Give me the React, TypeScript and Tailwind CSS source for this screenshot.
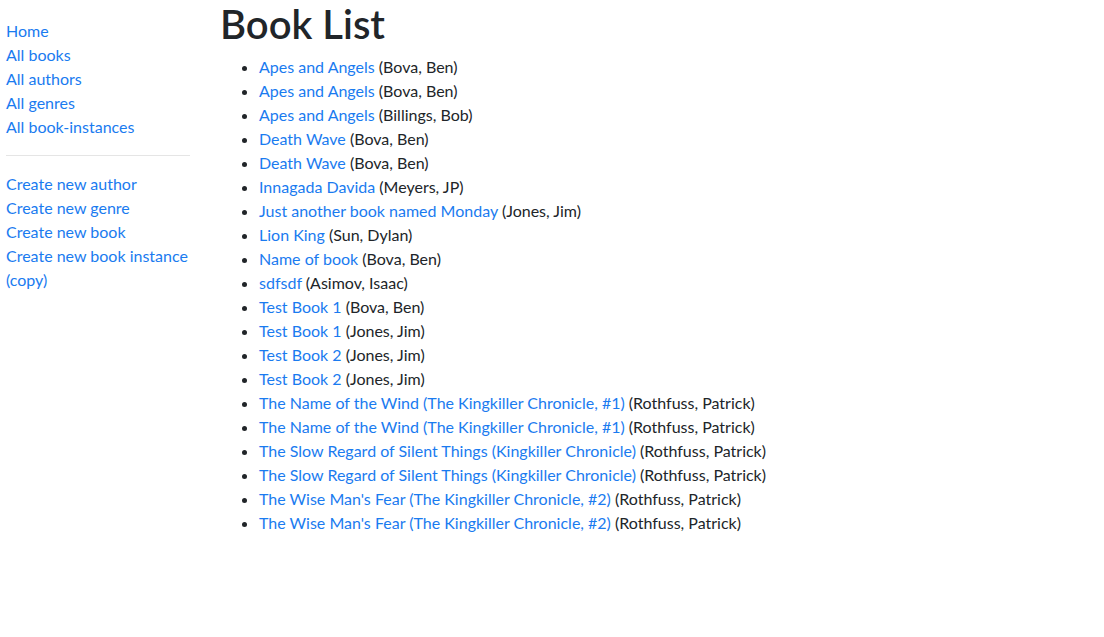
const books: [string, string][] = [
  ["Apes and Angels", "Bova, Ben"],
  ["Apes and Angels", "Bova, Ben"],
  ["Apes and Angels", "Billings, Bob"],
  ["Death Wave", "Bova, Ben"],
  ["Death Wave", "Bova, Ben"],
  ["Innagada Davida", "Meyers, JP"],
  ["Just another book named Monday", "Jones, Jim"],
  ["Lion King", "Sun, Dylan"],
  ["Name of book", "Bova, Ben"],
  ["sdfsdf", "Asimov, Isaac"],
  ["Test Book 1", "Bova, Ben"],
  ["Test Book 1", "Jones, Jim"],
  ["Test Book 2", "Jones, Jim"],
  ["Test Book 2", "Jones, Jim"],
  ["The Name of the Wind (The Kingkiller Chronicle, #1)", "Rothfuss, Patrick"],
  ["The Name of the Wind (The Kingkiller Chronicle, #1)", "Rothfuss, Patrick"],
  ["The Slow Regard of Silent Things (Kingkiller Chronicle)", "Rothfuss, Patrick"],
  ["The Slow Regard of Silent Things (Kingkiller Chronicle)", "Rothfuss, Patrick"],
  ["The Wise Man's Fear (The Kingkiller Chronicle, #2)", "Rothfuss, Patrick"],
  ["The Wise Man's Fear (The Kingkiller Chronicle, #2)", "Rothfuss, Patrick"],
];

const navTop = ["Home", "All books", "All authors", "All genres", "All book-instances"];
const navCreate = ["Create new author", "Create new genre", "Create new book", "Create new book instance (copy)"];

export default function App() {
  return (
    <div className="flex min-h-[637px] bg-white text-[16px] leading-6 text-[#212529] font-['Lato',sans-serif]">
      <div className="w-[190px] shrink-0 pl-[6px]">
        <ul className="mt-[19px] list-none p-0">
          {navTop.map((n) => (
            <li key={n}>
              <a href="#" className="text-[#1a7bf0]">{n}</a>
            </li>
          ))}
        </ul>
        <hr className="my-4 border-t border-[#e5e5e5]" />
        <ul className="list-none p-0">
          {navCreate.map((n) => (
            <li key={n}>
              <a href="#" className="text-[#1a7bf0]">{n}</a>
            </li>
          ))}
        </ul>
      </div>
      <div className="ml-[30px] flex-1">
        <h1 className="mb-2 text-[40px] font-semibold leading-[1.2]">Book List</h1>
        <ul className="-mt-px list-disc pl-[39px]">
          {books.map(([t, a], i) => (
            <li key={i}>
              <a href="#" className="text-[#1a7bf0]">{t}</a> ({a})
            </li>
          ))}
        </ul>
      </div>
    </div>
  );
}
